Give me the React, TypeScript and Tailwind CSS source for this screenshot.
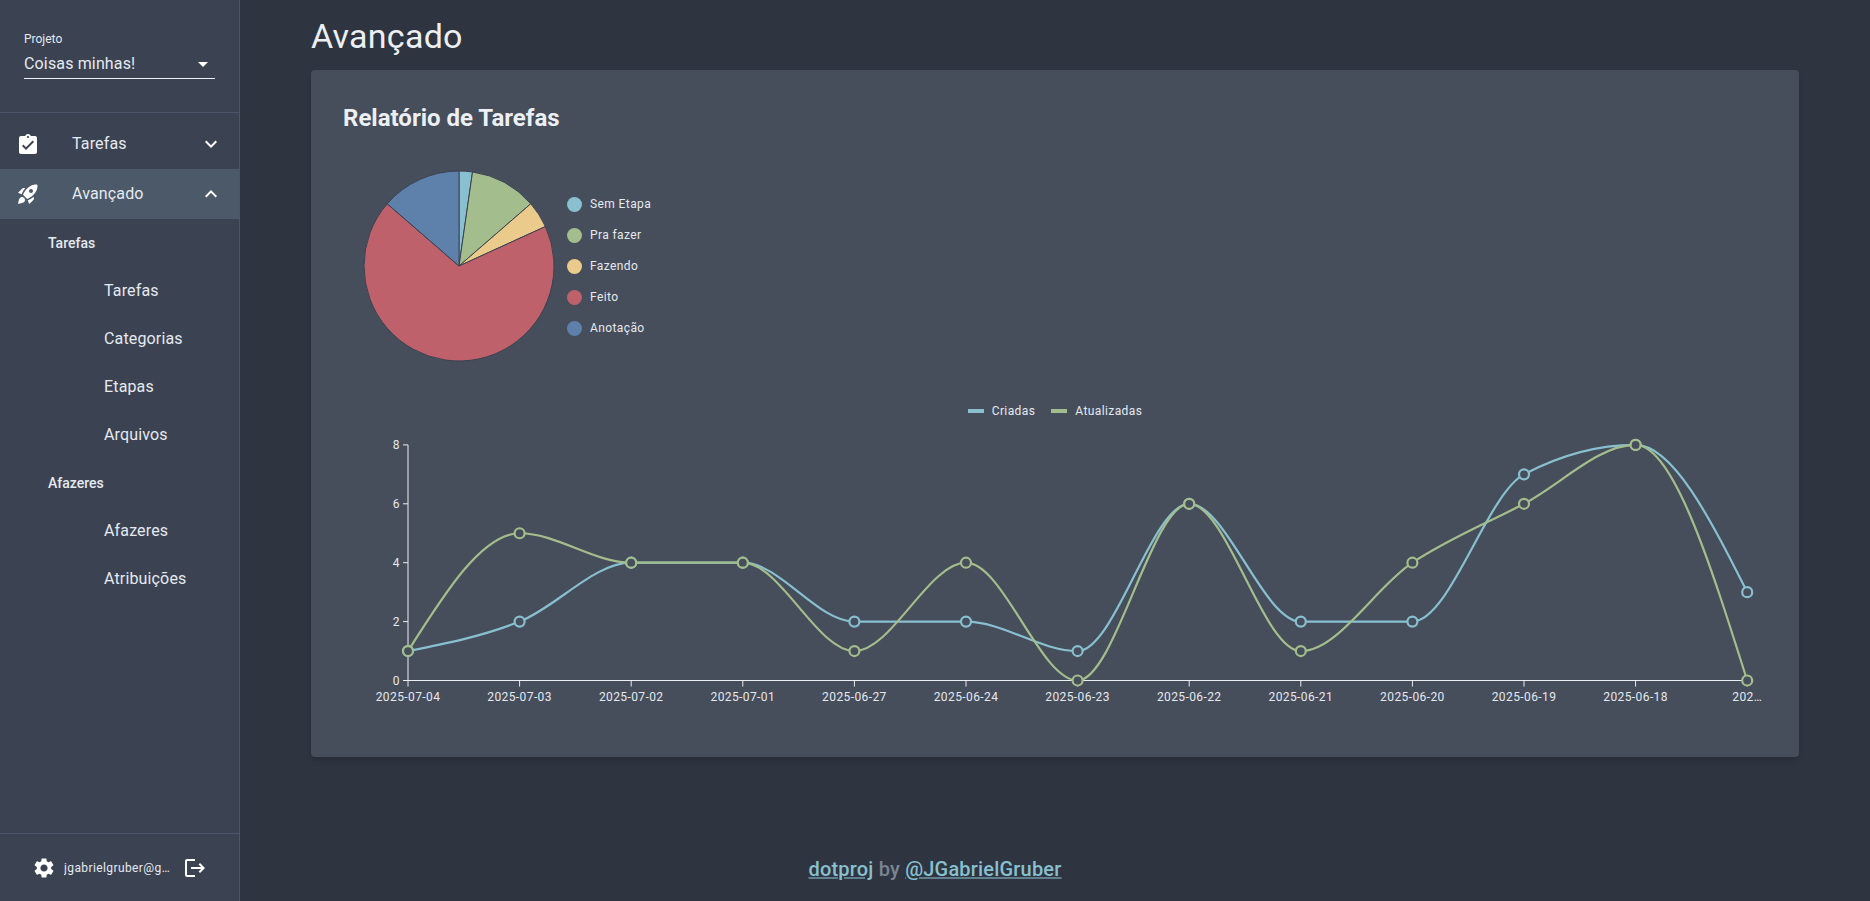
import {
  MdArrowDropDown,
  MdAssignmentTurnedIn,
  MdExpandLess,
  MdExpandMore,
  MdLogout,
  MdRocketLaunch,
  MdSettings,
} from "react-icons/md";

const pieData = [
  { label: "Sem Etapa", value: 1, color: "#88C0D0", dot: "bg-[#88C0D0]" },
  { label: "Pra fazer", value: 5, color: "#A3BE8C", dot: "bg-[#A3BE8C]" },
  { label: "Fazendo", value: 2, color: "#EBCB8B", dot: "bg-[#EBCB8B]" },
  { label: "Feito", value: 30, color: "#BF616A", dot: "bg-[#BF616A]" },
  { label: "Anotação", value: 6, color: "#5E81AC", dot: "bg-[#5E81AC]" },
];

const days = [
  "2025-07-04",
  "2025-07-03",
  "2025-07-02",
  "2025-07-01",
  "2025-06-27",
  "2025-06-24",
  "2025-06-23",
  "2025-06-22",
  "2025-06-21",
  "2025-06-20",
  "2025-06-19",
  "2025-06-18",
  "202…",
];
const created = [1, 2, 4, 4, 2, 2, 1, 6, 2, 2, 7, 8, 3];
const updated = [1, 5, 4, 4, 1, 4, 0, 6, 1, 4, 6, 8, 0];

const CARD = "#464D5B";
const X0 = 65;
const STEP_X = 111.6;
const Y0 = 255.5;
const STEP_Y = 29.45;

const px = (i: number) => X0 + i * STEP_X;
const py = (v: number) => Y0 - v * STEP_Y;

// same curve as d3 curveMonotoneX
function monotonePath(values: number[]) {
  const n = values.length;
  const ys = values.map(py);
  const slopes: number[] = [];
  for (let i = 0; i < n - 1; i++) slopes.push((ys[i + 1] - ys[i]) / STEP_X);
  const t: number[] = new Array(n).fill(0);
  for (let i = 1; i < n - 1; i++) {
    const a = slopes[i - 1];
    const b = slopes[i];
    const p = (a + b) / 2;
    t[i] = (Math.sign(a) + Math.sign(b)) * Math.min(Math.abs(a), Math.abs(b), 0.5 * Math.abs(p)) || 0;
  }
  t[0] = (3 * slopes[0] - t[1]) / 2;
  t[n - 1] = (3 * slopes[n - 2] - t[n - 2]) / 2;
  let d = `M${px(0)},${ys[0]}`;
  for (let i = 0; i < n - 1; i++) {
    const h = STEP_X / 3;
    d += `C${px(i) + h},${ys[i] + h * t[i]},${px(i + 1) - h},${ys[i + 1] - h * t[i + 1]},${px(i + 1)},${ys[i + 1]}`;
  }
  return d;
}

function PieChart() {
  const total = pieData.reduce((sum, s) => sum + s.value, 0);
  const cx = 116;
  const cy = 100;
  const r = 95;
  let acc = 0;
  return (
    <svg width="220" height="200" className="shrink-0">
      {pieData.map((s) => {
        const a0 = (acc / total) * 2 * Math.PI;
        acc += s.value;
        const a1 = (acc / total) * 2 * Math.PI;
        const large = a1 - a0 > Math.PI ? 1 : 0;
        const d = `M${cx},${cy}L${cx + r * Math.sin(a0)},${cy - r * Math.cos(a0)}A${r},${r},0,${large},1,${cx + r * Math.sin(a1)},${cy - r * Math.cos(a1)}Z`;
        return <path key={s.label} d={d} fill={s.color} stroke="#3B4252" strokeWidth="1" />;
      })}
    </svg>
  );
}

function LineChart() {
  const series = [
    { values: created, color: "#88C0D0" },
    { values: updated, color: "#A3BE8C" },
  ];
  return (
    <svg width="1424" height="290" className="block overflow-visible">
      <g stroke="#ECEFF4" strokeWidth="1">
        <line x1={X0} x2={X0} y1={Y0 - 8 * STEP_Y} y2={Y0} />
        <line x1={X0} x2={px(12)} y1={Y0} y2={Y0} />
        {[0, 2, 4, 6, 8].map((v) => (
          <line key={v} x1={X0 - 5} x2={X0} y1={py(v)} y2={py(v)} />
        ))}
        {days.map((d, i) => (
          <line key={i} x1={px(i)} x2={px(i)} y1={Y0} y2={Y0 + 6} />
        ))}
      </g>
      <g fill="#E5E9F0" fontSize="12" letterSpacing="0.4">
        {[0, 2, 4, 6, 8].map((v) => (
          <text key={v} x={X0 - 8} y={py(v) + 4.5} textAnchor="end">
            {v}
          </text>
        ))}
        {days.map((d, i) => (
          <text key={i} x={px(i)} y={Y0 + 20} textAnchor="middle">
            {d}
          </text>
        ))}
      </g>
      {series.map((s) => (
        <g key={s.color}>
          <path d={monotonePath(s.values)} fill="none" stroke={s.color} strokeWidth="2.2" />
          {s.values.map((v, i) => (
            <circle key={i} cx={px(i)} cy={py(v)} r="5" fill={CARD} stroke={s.color} strokeWidth="2.2" />
          ))}
        </g>
      ))}
    </svg>
  );
}

function SubItem({ label }: { label: string }) {
  return <div className="h-12 flex items-center pl-[104px] text-base tracking-[0.15px]">{label}</div>;
}

export default function App() {
  return (
    <div className="flex h-screen overflow-hidden bg-[#2E3440] text-[#ECEFF4] font-['Roboto',sans-serif]">
      {/* Sidebar */}
      <aside className="w-[240px] shrink-0 flex flex-col bg-[#3B4252] border-r border-[#4C566A]">
        <div className="h-[113px] shrink-0 border-b border-[#4C566A] px-6 pt-[31px]">
          <div className="text-xs leading-[16px] text-[#E5E9F0]">Projeto</div>
          <div className="mt-[3px] h-[29px] flex items-center justify-between border-b border-[#ECEFF4] text-base text-[#E5E9F0]">
            <span className="tracking-[0.15px]">Coisas minhas!</span>
            <MdArrowDropDown className="w-6 h-6 text-white" />
          </div>
        </div>

        <nav className="flex-1 text-[#E5E9F0]">
          <div className="h-14 flex items-center px-4 pt-[6px]">
            <MdAssignmentTurnedIn className="w-6 h-6 mt-[2px] text-white" />
            <span className="ml-8 flex-1 text-base tracking-[0.15px]">Tarefas</span>
            <MdExpandMore className="w-6 h-6 text-white" />
          </div>
          <div className="h-[50px] flex items-center px-4 bg-[#4C5969]">
            <MdRocketLaunch className="w-6 h-6 text-white" />
            <span className="ml-8 flex-1 text-base tracking-[0.15px]">Avançado</span>
            <MdExpandLess className="w-6 h-6 text-white" />
          </div>
          <div className="h-12 flex items-center pl-12 text-sm font-medium">Tarefas</div>
          <SubItem label="Tarefas" />
          <SubItem label="Categorias" />
          <SubItem label="Etapas" />
          <SubItem label="Arquivos" />
          <div className="h-12 flex items-center pl-12 text-sm font-medium">Afazeres</div>
          <SubItem label="Afazeres" />
          <SubItem label="Atribuições" />
        </nav>

        <div className="h-[68px] shrink-0 border-t border-[#4C566A] flex items-center pl-[32px]">
          <MdSettings className="w-6 h-6 text-white" />
          <span className="ml-2 w-[106px] truncate text-xs tracking-[0.4px] text-[#E5E9F0]">jgabrielgruber@gmail.com</span>
          <MdLogout className="ml-[13px] w-6 h-6 text-white" />
        </div>
      </aside>

      {/* Main */}
      <main className="flex-1 min-w-0 flex flex-col">
        <div className="px-[71px]">
          <h1 className="pt-[15px] h-[70px] text-[34px] leading-[42px] tracking-[0.25px]">Avançado</h1>
          <section className="rounded bg-[#464D5B] shadow-md px-8 pt-8 pb-[42px]">
            <h2 className="text-2xl leading-8 font-bold">Relatório de Tarefas</h2>

            <div className="mt-8 flex items-center">
              <PieChart />
              <ul className="ml-1 flex flex-col gap-[15px]">
                {pieData.map((s) => (
                  <li key={s.label} className="h-4 flex items-center text-xs tracking-[0.4px] text-[#E5E9F0]">
                    <span className={`w-[15px] h-[15px] rounded-full ${s.dot}`} />
                    <span className="ml-2">{s.label}</span>
                  </li>
                ))}
              </ul>
            </div>

            <div className="mt-[37px] h-4 flex justify-center items-center text-xs tracking-[0.4px] text-[#E5E9F0]">
              <span className="w-4 h-1 bg-[#88C0D0]" />
              <span className="ml-2">Criadas</span>
              <span className="ml-4 w-4 h-1 bg-[#A3BE8C]" />
              <span className="ml-2">Atualizadas</span>
            </div>

            <div className="mt-[6px]">
              <LineChart />
            </div>
          </section>
        </div>

        <footer className="mt-auto pb-[18px] pr-[240px] text-center text-xl font-medium tracking-[0.19px] text-[#7B8494]">
          <span className="text-[#88C0D0] underline decoration-[#5F7F8F]">dotproj</span> by{" "}
          <span className="text-[#88C0D0] underline decoration-[#5F7F8F]">@JGabrielGruber</span>
        </footer>
      </main>
    </div>
  );
}
